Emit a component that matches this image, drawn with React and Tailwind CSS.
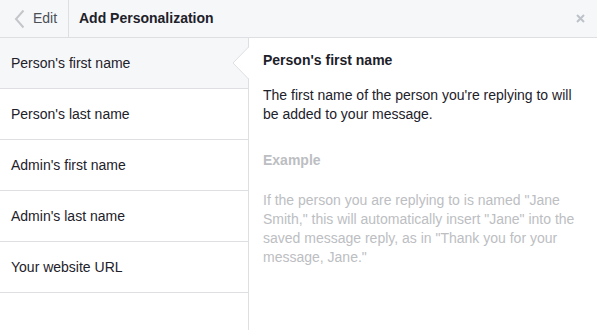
import React from 'react'

const fields = [
  "Person's first name",
  "Person's last name",
  "Admin's first name",
  "Admin's last name",
  'Your website URL',
]

export default function App() {
  return (
    <div
      className="w-[597px] h-[330px] bg-white overflow-hidden flex flex-col text-[#1d2129]"
      style={{ fontFamily: '"Liberation Sans", Arial, sans-serif' }}
    >
      {/* Header */}
      <div className="h-[38px] shrink-0 flex items-stretch bg-[#f6f7f9] border-b border-[#dddfe2]">
        <div className="w-[69px] flex items-center border-r border-[#dddfe2] pl-[14px]">
          <svg width="11" height="20" viewBox="0 0 11 20" className="mr-[8px]">
            <path d="M9.5 1.5 L2 10 L9.5 18.5" fill="none" stroke="#c4c6ca" strokeWidth="2" />
          </svg>
          <span className="text-[14px] text-[#4b4f56]">Edit</span>
        </div>
        <div className="flex-1 flex items-center pl-[10px] text-[14px] font-bold">Add Personalization</div>
        <div className="flex items-center pr-[12px]">
          <svg width="9" height="9" viewBox="0 0 9 9">
            <path d="M1 1 L8 8 M8 1 L1 8" stroke="#bec2c9" strokeWidth="2" />
          </svg>
        </div>
      </div>

      <div className="flex flex-1">
        {/* Left list */}
        <div className="w-[249px] shrink-0 border-r border-[#dddfe2]">
          {fields.map((f, i) => (
            <div
              key={f}
              className={`relative h-[51px] flex items-center pl-[11px] text-[14px] border-b border-[#dddfe2] ${
                i === 0 ? 'bg-[#f6f7f9]' : ''
              }`}
            >
              {f}
              {i === 0 && (
                <svg
                  width="17"
                  height="32"
                  viewBox="0 0 17 32"
                  className="absolute right-[-1px] top-[9px]"
                >
                  <path d="M17 0 L1 16 L17 32 Z" fill="#ffffff" />
                  <path d="M16.5 0 L1 16 L16.5 32" fill="none" stroke="#dddfe2" strokeWidth="1" />
                </svg>
              )}
            </div>
          ))}
        </div>

        {/* Right detail */}
        <div className="flex-1 pl-[14px] pr-[14px] pt-[13px] text-[14px] leading-[19px]">
          <div className="font-bold">Person's first name</div>
          <p className="mt-[16px]">
            The first name of the person you're replying to will be added to your message.
          </p>
          <div className="mt-[27px] font-bold text-[#bcbec2]">Example</div>
          <p className="mt-[21px] text-[#bcbec2]">
            If the person you are replying to is named "Jane Smith," this will automatically insert
            "Jane" into the saved message reply, as in "Thank you for your message, Jane."
          </p>
        </div>
      </div>
    </div>
  )
}
